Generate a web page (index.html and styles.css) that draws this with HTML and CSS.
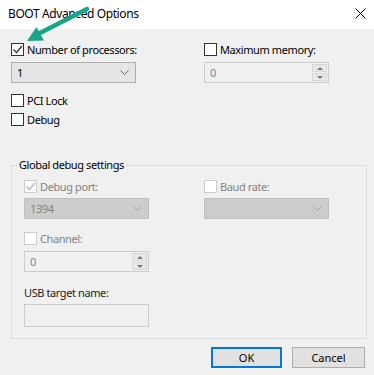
FILE: index.html
```html
<!DOCTYPE html>
<html lang="en">

<head>
    <meta charset="UTF-8">
    <meta name="viewport" content="width=device-width, initial-scale=1.0">
    <title>BOOT Advanced Options</title>
    <link rel="stylesheet" href="styles.css">
</head>

<body>
    <div class="janela">
        <div class="titulo">
            <span>BOOT Advanced Options</span>
            <svg class="fechar" width="11" height="11" viewBox="0 0 11 11">
                <path d="M0.5 0.5 L10.5 10.5 M10.5 0.5 L0.5 10.5" stroke="#000" stroke-width="1" fill="none" />
            </svg>
        </div>

        <div class="corpo">
            <div class="topo">
                <div class="coluna">
                    <label class="check">
                        <span class="caixa">
                            <svg width="11" height="11" viewBox="0 0 11 11">
                                <path d="M1.5 5.5 L4.5 8.5 L10 2" stroke="#333" stroke-width="1.2" fill="none" />
                            </svg>
                        </span>
                        Number of processors:
                    </label>
                    <div class="combo">
                        <span>1</span>
                        <svg width="9" height="6" viewBox="0 0 9 6">
                            <path d="M0.5 0.5 L4.5 4.5 L8.5 0.5" stroke="#666" stroke-width="1" fill="none" />
                        </svg>
                    </div>
                    <label class="check linha-pci"><span class="caixa"></span>PCI Lock</label>
                    <label class="check linha-debug"><span class="caixa"></span>Debug</label>
                </div>
                <div class="coluna">
                    <label class="check"><span class="caixa"></span>Maximum memory:</label>
                    <div class="spin">
                        <span class="valor">0</span>
                        <div class="setas">
                            <span class="cima"></span>
                            <span class="baixo"></span>
                        </div>
                    </div>
                </div>
            </div>

            <fieldset class="grupo">
                <legend>Global debug settings</legend>
                <div class="grade">
                    <div class="coluna">
                        <label class="check off">
                            <span class="caixa">
                                <svg width="11" height="11" viewBox="0 0 11 11">
                                    <path d="M1.5 5.5 L4.5 8.5 L10 2" stroke="#b5b5b5" stroke-width="1.2" fill="none" />
                                </svg>
                            </span>
                            Debug port:
                        </label>
                        <div class="combo off">
                            <span>1394</span>
                            <svg width="9" height="6" viewBox="0 0 9 6">
                                <path d="M0.5 0.5 L4.5 4.5 L8.5 0.5" stroke="#a0a0a0" stroke-width="1" fill="none" />
                            </svg>
                        </div>
                        <label class="check off linha-canal"><span class="caixa"></span>Channel:</label>
                        <div class="spin">
                            <span class="valor">0</span>
                            <div class="setas">
                                <span class="cima"></span>
                                <span class="baixo"></span>
                            </div>
                        </div>
                        <div class="rotulo">USB target name:</div>
                        <div class="texto"></div>
                    </div>
                    <div class="coluna">
                        <label class="check off"><span class="caixa"></span>Baud rate:</label>
                        <div class="combo off">
                            <span></span>
                            <svg width="9" height="6" viewBox="0 0 9 6">
                                <path d="M0.5 0.5 L4.5 4.5 L8.5 0.5" stroke="#a0a0a0" stroke-width="1" fill="none" />
                            </svg>
                        </div>
                    </div>
                </div>
            </fieldset>

            <div class="botoes">
                <button class="ok">OK</button>
                <button>Cancel</button>
            </div>
        </div>

        <svg class="seta" width="100" height="50" viewBox="0 0 100 50">
            <path d="M87 9 L40 33" stroke="#17a589" stroke-width="4.5" stroke-linecap="round" fill="none" />
            <polygon points="27,41 36.5,27 44,40.5" fill="#17a589" />
        </svg>
    </div>
</body>

</html>
```

FILE: styles.css
```css
* {
    box-sizing: border-box;
}

body {
    margin: 0;
    width: 374px;
    height: 375px;
    background: #f0f0f0;
    font-family: "Noto Sans", "Liberation Sans", sans-serif;
    font-size: 11px;
    letter-spacing: -0.4px;
    color: #000;
    overflow: hidden;
}

.janela {
    position: relative;
    width: 374px;
    height: 375px;
}

.titulo {
    height: 29px;
    background: #fff;
    display: flex;
    justify-content: space-between;
    align-items: center;
    padding: 0 8px 2px 8px;
    font-size: 12px;
}

.corpo {
    padding: 14px 0 0 11px;
}

.topo {
    display: grid;
    grid-template-columns: 193px 170px;
}

.coluna {
    display: flex;
    flex-direction: column;
}

.check {
    display: flex;
    align-items: center;
    gap: 3px;
    height: 13px;
    line-height: 13px;
    white-space: nowrap;
}

.caixa {
    width: 13px;
    height: 13px;
    border: 1px solid #333;
    background: #fff;
    display: flex;
    align-items: center;
    justify-content: center;
    flex-shrink: 0;
}

.check.off {
    color: #838383;
}

.check.off .caixa {
    border-color: #cccccc;
}

.combo {
    margin-top: 6px;
    width: 125px;
    height: 21px;
    border: 1px solid #adadad;
    background: #e5e5e5;
    display: flex;
    justify-content: space-between;
    align-items: center;
    padding: 0 6px 0 5px;
}

.combo.off {
    margin-top: 5px;
    background: #cccccc;
    border-color: #bfbfbf;
    color: #838383;
}

.linha-pci {
    margin-top: 11px;
}

.linha-debug {
    margin-top: 6px;
}

.spin {
    margin-top: 6px;
    width: 125px;
    height: 21px;
    border: 1px solid #cccccc;
    background: #f0f0f0;
    display: flex;
    justify-content: space-between;
    align-items: center;
    padding: 0 1px 0 5px;
    color: #838383;
}

.setas {
    display: flex;
    flex-direction: column;
    gap: 1px;
    width: 15px;
    height: 17px;
}

.setas span {
    flex: 1;
    background: #e8e8e8;
    border: 1px solid #d6d6d6;
    display: flex;
    align-items: center;
    justify-content: center;
}

.cima::after {
    content: "";
    border-left: 3px solid transparent;
    border-right: 3px solid transparent;
    border-bottom: 3px solid #7a7a7a;
}

.baixo::after {
    content: "";
    border-left: 3px solid transparent;
    border-right: 3px solid transparent;
    border-top: 3px solid #7a7a7a;
}

.grupo {
    margin: 32px 0 0 0;
    width: 356px;
    border: 1px solid #dcdcdc;
    padding: 8px 12px 11px 12px;
}

.grupo legend {
    margin-left: -7px;
    padding: 0 2px;
    line-height: 14px;
    font-size: 11px;
}

.grade {
    display: grid;
    grid-template-columns: 180px 140px;
}

.linha-canal {
    margin-top: 13px;
}

.rotulo {
    margin-top: 14px;
    height: 13px;
    line-height: 13px;
    color: #222;
}

.texto {
    margin-top: 5px;
    width: 125px;
    height: 23px;
    border: 1px solid #cccccc;
    background: #f0f0f0;
}

.botoes {
    margin-top: 8px;
    padding-right: 9px;
    display: flex;
    justify-content: flex-end;
    gap: 10px;
}

.botoes button {
    width: 73px;
    height: 21px;
    border: 1px solid #adadad;
    background: #e1e1e1;
    font-family: inherit;
    font-size: 11px;
    color: #000;
    padding: 0;
}

.botoes .ok {
    border: 2px solid #0078d7;
    width: 71px;
}

.seta {
    position: absolute;
    left: 0;
    top: 0;
}
```
